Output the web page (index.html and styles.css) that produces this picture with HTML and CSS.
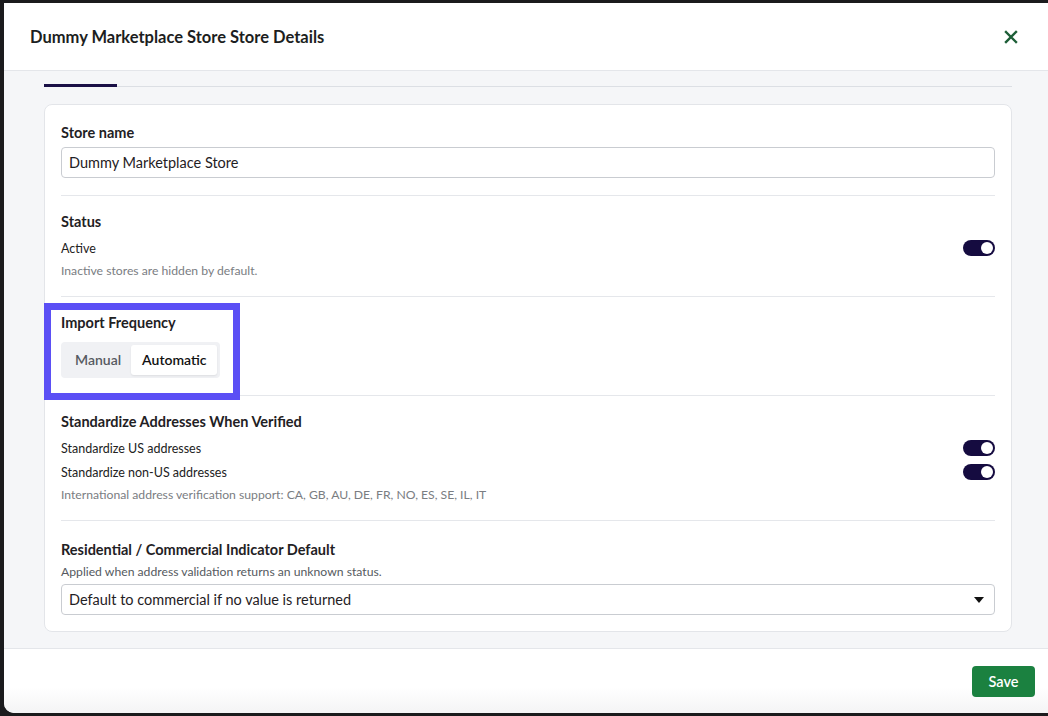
FILE: index.html
```html
<!DOCTYPE html>
<html lang="en">
<head>
    <meta charset="UTF-8">
    <meta name="viewport" content="width=device-width, initial-scale=1.0">
    <title>Store Details</title>
    <link rel="stylesheet" href="styles.css">
</head>
<body>

<div class="modal">
    <div class="modal-header">
        <h1 class="modal-title">Dummy Marketplace Store Store Details</h1>
        <button class="close-btn" aria-label="Close">
            <svg width="14" height="14" viewBox="0 0 14 14">
                <path d="M2 2 L12 12 M12 2 L2 12" stroke="#1d5e37" stroke-width="2.4" stroke-linecap="square" fill="none"/>
            </svg>
        </button>
    </div>

    <div class="modal-body">
        <div class="tabs">
            <div class="tab active"></div>
            <div class="tab"></div>
        </div>

        <div class="card">
            <div class="section first">
                <div class="label">Store name</div>
                <input class="text-input" type="text" value="Dummy Marketplace Store">
            </div>

            <div class="section">
                <div class="label">Status</div>
                <div class="row">
                    <span>Active</span>
                    <span class="toggle"><span class="knob"></span></span>
                </div>
                <div class="help">Inactive stores are hidden by default.</div>
            </div>

            <div class="section highlight-wrap">
                <div class="label">Import Frequency</div>
                <div class="segmented">
                    <span class="seg">Manual</span>
                    <span class="seg selected">Automatic</span>
                </div>
                <div class="highlight"></div>
            </div>

            <div class="section">
                <div class="label">Standardize Addresses When Verified</div>
                <div class="row">
                    <span>Standardize US addresses</span>
                    <span class="toggle"><span class="knob"></span></span>
                </div>
                <div class="row">
                    <span>Standardize non-US addresses</span>
                    <span class="toggle"><span class="knob"></span></span>
                </div>
                <div class="help">International address verification support: CA, GB, AU, DE, FR, NO, ES, SE, IL, IT</div>
            </div>

            <div class="section last">
                <div class="label">Residential / Commercial Indicator Default</div>
                <div class="help tight">Applied when address validation returns an unknown status.</div>
                <div class="select">
                    <span>Default to commercial if no value is returned</span>
                    <span class="caret"></span>
                </div>
            </div>
        </div>
    </div>

    <div class="modal-footer">
        <button class="save-btn">Save</button>
    </div>
</div>

</body>
</html>
```

FILE: styles.css
```css
body {
    margin: 0;
    background-color: #1b1b1d;
    font-family: Lato, "Noto Sans", Arial, sans-serif;
    color: #1f2124;
    overflow: hidden;
}

.modal {
    margin: 3px 0 0 4px;
    height: 710px;
    background: #fff;
    border-radius: 0 0 0 10px;
    overflow: hidden;
    display: flex;
    flex-direction: column;
}

.modal-header {
    height: 67px;
    display: flex;
    align-items: center;
    justify-content: space-between;
    padding: 0 30px 0 26px;
    border-bottom: 1px solid #e4e6ea;
    flex-shrink: 0;
}

.modal-title {
    margin: 0;
    font-size: 16.5px;
    font-weight: 700;
    color: #1c1e21;
}

.close-btn {
    background: none;
    border: none;
    padding: 0;
    width: 14px;
    height: 14px;
    cursor: pointer;
}

.modal-body {
    flex: 1;
    background: #f5f6f8;
    padding: 0 36px 16px 40px;
    border-bottom: 1px solid #e4e6ea;
}

.tabs {
    display: flex;
    height: 15px;
    border-bottom: 1px solid #dcdfe4;
    margin-bottom: 17px;
}

.tab {
    width: 73px;
    margin-right: 30px;
}

.tab.active {
    border-bottom: 3px solid #1a1046;
    margin-bottom: -1px;
}

.card {
    background: #fff;
    border: 1px solid #e3e5e9;
    border-radius: 8px;
    padding: 0 16px;
}

.section {
    padding: 16px 0 17px;
    border-bottom: 1px solid #e5e7eb;
}

.section.first {
    padding-top: 18px;
}

.section.last {
    border-bottom: none;
    padding-top: 19px;
    padding-bottom: 16px;
}

.label {
    font-size: 14.5px;
    font-weight: 700;
    line-height: 20px;
    margin-bottom: 4px;
}

.text-input {
    display: block;
    box-sizing: border-box;
    width: 100%;
    height: 31px;
    border: 1px solid #c9ccd1;
    border-radius: 4px;
    padding: 0 7px;
    font-family: inherit;
    font-size: 14.5px;
    color: #1f2124;
}

.row {
    display: flex;
    justify-content: space-between;
    align-items: center;
    height: 24px;
    font-size: 12.5px;
    color: #222;
}

.toggle {
    width: 32px;
    height: 16px;
    border-radius: 8px;
    background: #150b40;
    display: flex;
    align-items: center;
    justify-content: flex-end;
    padding: 0 2px;
    box-sizing: border-box;
}

.knob {
    width: 12px;
    height: 12px;
    border-radius: 50%;
    background: #fff;
}

.help {
    font-size: 12.2px;
    color: #7a7d82;
    line-height: 16px;
    margin-top: 3px;
}

.help.tight {
    margin-top: 0;
    margin-bottom: 4px;
    color: #555a60;
}

.highlight-wrap {
    position: relative;
}

.segmented {
    display: inline-flex;
    margin-top: 5px;
    padding: 3px;
    background: #f0f1f4;
    border-radius: 4px;
}

.seg {
    padding: 0 10px 0 11px;
    height: 30px;
    line-height: 30px;
    font-size: 14px;
    font-weight: 600;
    color: #565a61;
}

.seg.selected {
    background: #fff;
    color: #111;
    border-radius: 3px;
    box-shadow: 0 1px 2px rgba(0, 0, 0, 0.08);
}

/* annotation box over the section */
.highlight {
    position: absolute;
    left: -17px;
    top: 6px;
    width: 196px;
    height: 97px;
    box-sizing: border-box;
    border: 7px solid #5b4ff5;
    pointer-events: none;
}

.select {
    display: flex;
    align-items: center;
    justify-content: space-between;
    height: 31px;
    box-sizing: border-box;
    border: 1px solid #c9ccd1;
    border-radius: 4px;
    padding: 0 10px 0 7px;
    font-size: 14.5px;
}

.caret {
    width: 0;
    height: 0;
    border-left: 5px solid transparent;
    border-right: 5px solid transparent;
    border-top: 6px solid #111;
}

.modal-footer {
    height: 64px;
    display: flex;
    justify-content: flex-end;
    align-items: flex-start;
    padding: 17px 13px 0 0;
    box-sizing: border-box;
    background: linear-gradient(#fff 60%, #f4f4f5);
}

.save-btn {
    width: 63px;
    height: 31px;
    background: #1b8140;
    color: #fff;
    border: none;
    border-radius: 4px;
    font-family: inherit;
    font-size: 14.5px;
    font-weight: 600;
    cursor: pointer;
}
```
